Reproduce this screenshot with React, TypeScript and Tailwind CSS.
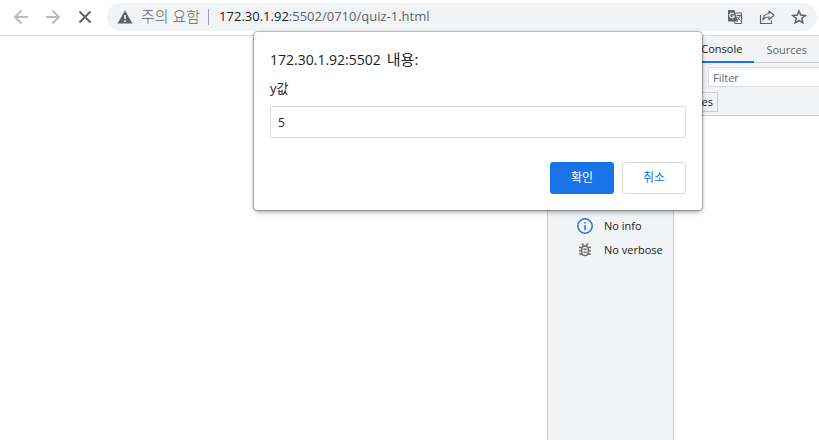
import type { ReactNode } from "react";

function ArrowIcon({ className = "" }: { className?: string }) {
  return (
    <svg viewBox="0 0 16 16" className={`h-4 w-4 ${className}`} fill="none" stroke="currentColor" strokeWidth="2" aria-hidden="true">
      <path d="M15 8H2M8.5 1.5L2 8l6.5 6.5" />
    </svg>
  );
}

function StopIcon() {
  return (
    <svg viewBox="0 0 16 16" className="h-4 w-4" fill="none" stroke="currentColor" strokeWidth="2" aria-hidden="true">
      <path d="M2.5 2.5l11 11M13.5 2.5l-11 11" />
    </svg>
  );
}

function WarningIcon() {
  return (
    <svg viewBox="0 0 16 16" className="h-4 w-4 shrink-0 text-[#5f6368]" aria-hidden="true">
      <path fill="currentColor" d="M8 1.5L15.5 14.5H.5z" />
      <path stroke="#f1f3f4" strokeWidth="1.6" d="M8 6v4M8 11.3v1.6" />
    </svg>
  );
}

function TranslateIcon() {
  return (
    <svg viewBox="0 0 16 16" className="h-4 w-4" aria-hidden="true">
      <path fill="none" stroke="currentColor" d="M8.5 4h6v10.5H8L7 12" />
      <path fill="currentColor" d="M2 1h5.5L11 12.5H2a1 1 0 0 1-1-1V2a1 1 0 0 1 1-1z" />
      <path fill="none" stroke="#f1f3f4" strokeWidth="1.2" d="M7 5.3A2.3 2.3 0 1 0 7.3 7H5.2" />
      <path fill="none" stroke="currentColor" d="M9.5 6.5H14M11.8 5.5v1M13 6.5c-.3 2-1.3 3.3-2.5 4.5M10.5 8c.8 1.5 1.8 2.5 3 3.5" />
    </svg>
  );
}

function ShareIcon() {
  return (
    <svg viewBox="0 0 16 16" className="h-4 w-4" fill="none" stroke="currentColor" strokeWidth="1.2" aria-hidden="true">
      <path d="M1.5 6v8.5h11V11.5" />
      <path strokeLinejoin="round" d="M10 2l5 4.3-5 4.2V8C7 8 5.2 8.8 3.8 11 4.2 7.5 6.2 4.9 10 4.5z" />
    </svg>
  );
}

function StarIcon() {
  return (
    <svg viewBox="0 0 16 16" className="h-4 w-4" fill="none" stroke="currentColor" strokeWidth="1.5" aria-hidden="true">
      <path d="M8 2l1.7 4.1 4.5.4-3.4 2.9 1 4.4L8 11.5l-3.8 2.3 1-4.4-3.4-2.9 4.5-.4z" />
    </svg>
  );
}

function InfoIcon() {
  return (
    <svg viewBox="0 0 16 16" className="h-4 w-4" fill="none" stroke="#1a73e8" strokeWidth="1.5" aria-hidden="true">
      <circle cx="8" cy="8" r="7.2" />
      <path d="M8 4v1.6M8 7v5" />
    </svg>
  );
}

function BugIcon() {
  return (
    <svg viewBox="0 0 16 16" className="h-4 w-4" fill="none" stroke="#6e6e6e" strokeWidth="1.5" aria-hidden="true">
      <rect x="4.7" y="4" width="6.6" height="9.5" rx="3.3" />
      <path d="M5 1.5l2 2.3M11 1.5L9 3.8M2 5.5h3M11 5.5h3M2 8.7h3M11 8.7h3M2 12h3.2M10.8 12H14M6.5 7.3h3M6.5 10.3h3" />
    </svg>
  );
}

function IconButton({ label, className = "", children }: { label: string; className?: string; children: ReactNode }) {
  return (
    <button type="button" aria-label={label} className={`flex h-4 w-4 items-center justify-center ${className}`}>
      {children}
    </button>
  );
}

function Toolbar() {
  return (
    <header className="flex h-9 items-center border-b border-[#dadce0] bg-white pr-0.5 pb-0.5 pl-[13px]">
      <nav className="flex gap-4 text-[#babcbe]">
        <IconButton label="뒤로">
          <ArrowIcon />
        </IconButton>
        <IconButton label="앞으로">
          <ArrowIcon className="rotate-180" />
        </IconButton>
        <IconButton label="중지" className="text-[#5f6368]">
          <StopIcon />
        </IconButton>
      </nav>
      <div className="ml-3.5 flex h-7 min-w-0 flex-1 items-center rounded-full bg-[#f1f3f4] px-2.5 text-[13px] text-[#5f6368]">
        <WarningIcon />
        <span className="ml-2 text-[15px] font-light whitespace-nowrap">주의 요함</span>
        <span className="mr-2.5 ml-2 h-4 w-px bg-[#9aa0a6]" />
        <span className="flex-1 whitespace-nowrap">
          <span className="text-[#202124]">172.30.1.92</span>:5502/0710/quiz-1.html
        </span>
        <div className="flex gap-4">
          <IconButton label="번역">
            <TranslateIcon />
          </IconButton>
          <IconButton label="공유">
            <ShareIcon />
          </IconButton>
          <IconButton label="북마크">
            <StarIcon />
          </IconButton>
        </div>
      </div>
    </header>
  );
}

const levels = [
  { label: "No info", icon: <InfoIcon /> },
  { label: "No verbose", icon: <BugIcon /> },
];

function DevTools() {
  return (
    <aside className="flex w-[272px] shrink-0 flex-col border-l border-[#cacdd1] text-[11px] text-[#202124]">
      <div className="flex h-[27px] justify-end border-b border-[#cacdd1] bg-[#f1f3f4] text-[#5f6368]">
        <button type="button" className="-mb-px border-b-2 border-[#1a73e8] px-3 pt-0.5 text-[#202124]">
          Console
        </button>
        <button type="button" className="px-3 pt-0.5">
          Sources
        </button>
      </div>
      <div className="flex h-[26px] items-center justify-end bg-[#f1f3f4]">
        <input
          type="text"
          aria-label="Filter"
          placeholder="Filter"
          className="mt-0.5 h-5 w-[111px] border border-r-0 border-[#dadce0] bg-white px-1 outline-none placeholder:text-[#5f6368]"
        />
      </div>
      <div className="flex h-[27px] items-center justify-end border-b border-[#cacdd1] bg-[#f1f3f4] pr-[101px]">
        <button type="button" className="h-5 border border-[#cacdd1] px-1">
          No Issues
        </button>
      </div>
      <div className="flex flex-1">
        <ul className="w-[126px] border-r border-[#cacdd1] bg-[#f1f3f4] pt-[98px] pl-[29px]">
          {levels.map((level) => (
            <li key={level.label} className="flex h-6 items-center gap-[11px] whitespace-nowrap">
              {level.icon}
              {level.label}
            </li>
          ))}
        </ul>
        <div className="flex-1 bg-white" />
      </div>
    </aside>
  );
}

function PromptDialog() {
  return (
    <form
      role="dialog"
      aria-labelledby="prompt-title"
      className="absolute top-8 left-[254px] w-[448px] rounded bg-white p-4 text-[#202124] shadow-[0_0_1px_1px_rgba(0,0,0,0.25),0_2px_5px_rgba(0,0,0,0.35)]"
    >
      <h1 id="prompt-title" className="mt-0.5 flex h-5 items-center gap-1.5 text-sm">
        172.30.1.92:5502 <span className="text-[15px]">내용:</span>
      </h1>
      <label htmlFor="prompt-value" className="mt-2 block text-[13px] leading-5">
        y값
      </label>
      <input
        id="prompt-value"
        type="text"
        defaultValue="5"
        className="mt-2 block h-8 w-full rounded-xs border border-[#dadce0] px-[7px] text-xs outline-none"
      />
      <div className="mt-6 flex justify-end gap-2 text-xs">
        <button type="button" className="h-8 w-16 rounded-[3px] bg-[#1a73e8] text-white">
          확인
        </button>
        <button type="button" className="h-8 w-16 rounded-[3px] border border-[#dadce0] text-[#1a73e8]">
          취소
        </button>
      </div>
    </form>
  );
}

export default function App() {
  return (
    <div className="relative flex min-h-screen flex-col bg-white font-['Open_Sans','Noto_Sans_CJK_KR',sans-serif]">
      <Toolbar />
      <div className="flex flex-1">
        <main className="flex-1" />
        <DevTools />
      </div>
      <PromptDialog />
    </div>
  );
}
